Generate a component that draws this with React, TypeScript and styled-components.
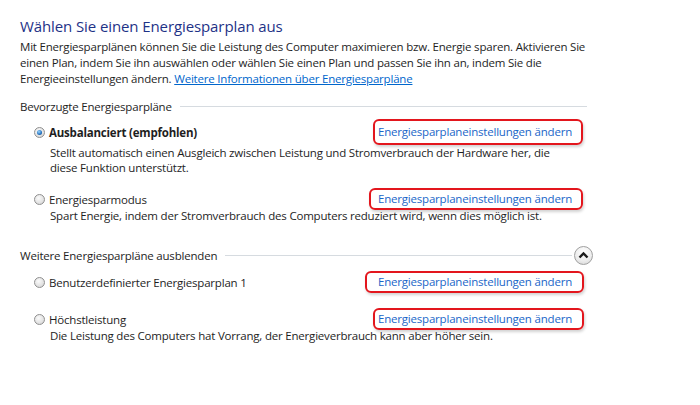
import React from "react";
import styled, { createGlobalStyle } from "styled-components";

const GlobalStyle = createGlobalStyle`
  html, body {
    margin: 0;
    background: #fff;
  }
  body {
    font-family: "Open Sans", "Noto Sans", sans-serif;
    font-size: 11.5px;
    letter-spacing: -0.2px;
    color: #1e1e1e;
  }
`;

const Page = styled.div`
  width: 700px;
  height: 405px;
  padding: 0 0 0 20px;
  box-sizing: border-box;
  overflow: hidden;
`;

const Content = styled.div`
  width: 567px;
  white-space: nowrap;
`;

const Title = styled.h1`
  margin: 16px 0 0;
  font-size: 15px;
  line-height: 20px;
  font-weight: normal;
  letter-spacing: -0.1px;
  color: #1e3287;
`;

const Intro = styled.p`
  margin: 3px 0 0;
  line-height: 16px;
`;

const InlineLink = styled.a`
  color: #0066cc;
  text-decoration: underline;
`;

const SectionHead = styled.div<{ $top: number }>`
  display: flex;
  align-items: center;
  gap: 8px;
  margin-top: ${(p) => p.$top}px;
  height: 16px;
`;

const SectionRule = styled.div`
  flex: 1;
  height: 1px;
  background: #d6dbe0;
`;

const Collapse = styled.button`
  width: 19px;
  height: 19px;
  margin: 0 -6px 0 -6px;
  padding: 0;
  border-radius: 50%;
  border: 1px solid #a0a0a0;
  background: radial-gradient(circle at 50% 30%, #ffffff 0%, #ececec 60%, #d2d2d2 100%);
  display: flex;
  align-items: center;
  justify-content: center;
  flex-shrink: 0;
`;

const Plan = styled.div<{ $top: number }>`
  margin-top: ${(p) => p.$top}px;
  padding-left: 14px;
`;

const PlanRow = styled.div`
  display: flex;
  align-items: center;
  height: 16px;
`;

const Radio = styled.span<{ $checked?: boolean }>`
  position: relative;
  width: 9px;
  height: 9px;
  border-radius: 50%;
  border: 1px solid #8f8f8f;
  background: radial-gradient(circle at 40% 35%, #fbfbfb 0%, #e4e4e4 55%, #cdcdcd 100%);
  margin-right: 4px;
  flex-shrink: 0;

  &::after {
    content: "";
    display: ${(p) => (p.$checked ? "block" : "none")};
    position: absolute;
    left: 2px;
    top: 2px;
    width: 5px;
    height: 5px;
    border-radius: 50%;
    background: radial-gradient(circle at 40% 35%, #9bd6ff 0%, #2a78c4 55%, #0d3f7a 100%);
  }
`;

const PlanName = styled.span<{ $bold?: boolean }>`
  width: 329px;
  flex-shrink: 0;
  font-weight: ${(p) => (p.$bold ? 700 : 400)};
`;

const EditLink = styled.a<{ $l: number; $r: number; $v: number }>`
  display: inline-block;
  color: #1a66c8;
  text-decoration: none;
  line-height: 16px;
  padding: ${(p) => p.$v}px ${(p) => p.$r}px ${(p) => p.$v}px ${(p) => p.$l}px;
  margin: -${(p) => p.$v + 2}px 0 -${(p) => p.$v + 2}px -${(p) => p.$l + 2}px;
  border: 2px solid #e3161d;
  border-radius: 6px;
  box-shadow: 1px 2px 3px rgba(0, 0, 0, 0.18);
`;

const Desc = styled.div<{ $top: number }>`
  margin-top: ${(p) => p.$top}px;
  padding-left: 16px;
  line-height: 15px;
`;

const Chevron = () => (
  <svg width="11" height="8" viewBox="0 0 11 8">
    <path d="M1.5 6.5 L5.5 2.5 L9.5 6.5" fill="none" stroke="#1b1b1b" strokeWidth="2.4" />
  </svg>
);

type PlanProps = {
  name: string;
  top: number;
  descTop?: number;
  desc?: React.ReactNode;
  checked?: boolean;
  box: [number, number, number];
};

const PlanItem = ({ name, top, descTop = 1, desc, checked, box }: PlanProps) => (
  <Plan $top={top}>
    <PlanRow>
      <Radio $checked={checked} />
      <PlanName $bold={checked}>{name}</PlanName>
      <EditLink href="#" $l={box[0]} $r={box[1]} $v={box[2]}>
        Energiesparplaneinstellungen ändern
      </EditLink>
    </PlanRow>
    {desc && <Desc $top={descTop}>{desc}</Desc>}
  </Plan>
);

export default function App() {
  return (
    <Page>
      <GlobalStyle />
      <Content>
        <Title>Wählen Sie einen Energiesparplan aus</Title>
        <Intro>
          Mit Energiesparplänen können Sie die Leistung des Computer maximieren bzw. Energie sparen. Aktivieren Sie
          <br />
          einen Plan, indem Sie ihn auswählen oder wählen Sie einen Plan und passen Sie ihn an, indem Sie die
          <br />
          Energieeinstellungen ändern. <InlineLink href="#">Weitere Informationen über Energiesparpläne</InlineLink>
        </Intro>

        <SectionHead $top={11}>
          Bevorzugte Energiesparpläne
          <SectionRule />
        </SectionHead>
        <PlanItem
          name="Ausbalanciert (empfohlen)"
          top={10}
          descTop={5}
          checked
          box={[3, 9, 3]}
          desc={
            <>
              Stellt automatisch einen Ausgleich zwischen Leistung und Stromverbrauch der Hardware her, die
              <br />
              diese Funktion unterstützt.
            </>
          }
        />
        <PlanItem
          name="Energiesparmodus"
          top={16}
          box={[7, 9, 1]}
          desc="Spart Energie, indem der Stromverbrauch des Computers reduziert wird, wenn dies möglich ist."
        />

        <SectionHead $top={24}>
          Weitere Energiesparpläne ausblenden
          <SectionRule />
          <Collapse aria-label="ausblenden">
            <Chevron />
          </Collapse>
        </SectionHead>
        <PlanItem name="Benutzerdefinierter Energiesparplan 1" top={11} box={[11, 10, 1]} />
        <PlanItem
          name="Höchstleistung"
          top={21}
          box={[3, 10, 1]}
          desc="Die Leistung des Computers hat Vorrang, der Energieverbrauch kann aber höher sein."
        />
      </Content>
    </Page>
  );
}
